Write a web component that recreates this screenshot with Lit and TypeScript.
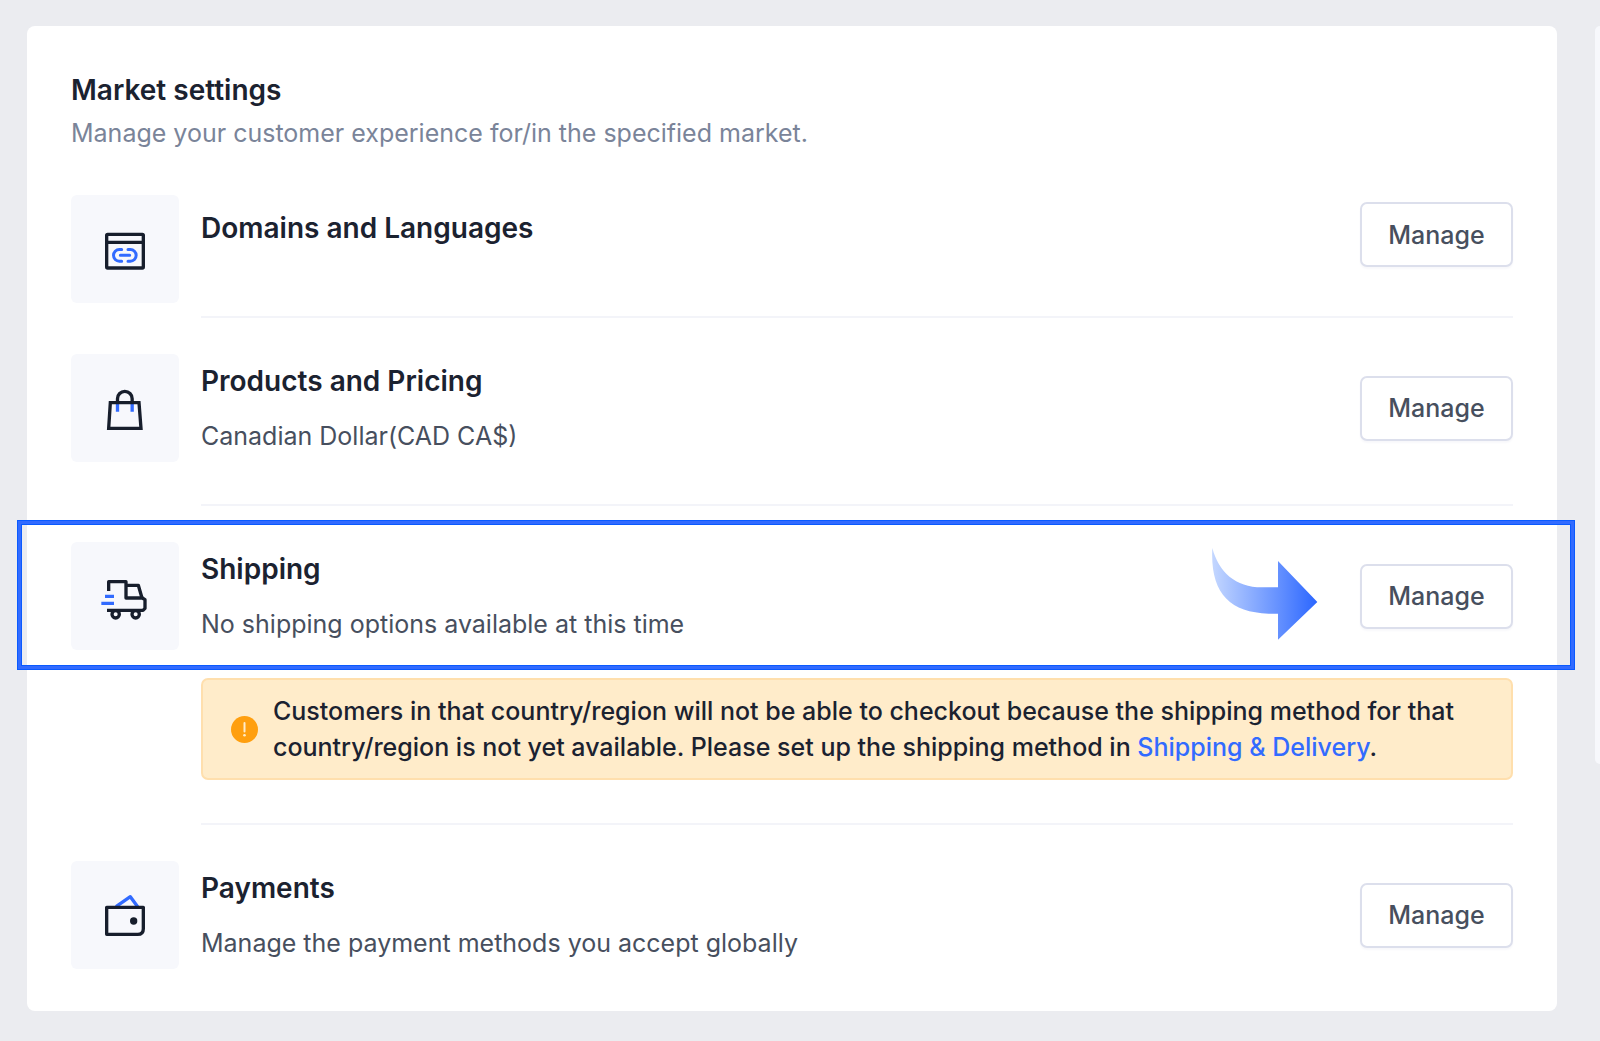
import { LitElement, html, svg, css, nothing } from "lit";
import { customElement } from "lit/decorators.js";

const INK = "#171e2c";
const BLUE = "#326bff";

const icons = {
  domains: svg`
    <g fill="none" stroke=${INK} stroke-width="10">
      <rect x="107" y="118" width="110" height="101" rx="3" />
      <path d="M107 142H217" />
    </g>
    <g fill="none" stroke=${BLUE} stroke-width="9" stroke-linecap="round">
      <path d="M152 163.500H145a17.500 17.500 0 0 0 0 35H152M171 163.500H178a17.500 17.500 0 0 1 0 35H171M148 181H176" />
    </g>`,
  products: svg`
    <g fill="none" stroke-width="10">
      <path stroke=${BLUE} d="M139.500 148V173M183.500 148V173" />
      <path stroke=${INK} d="M118 146H204L210 223H113Z" />
      <path stroke=${INK} d="M139.500 146V134a22 22 0 0 1 44 0V146" />
    </g>`,
  shipping: svg`
    <g fill="none" stroke-width="10" stroke-linejoin="round">
      <path stroke=${INK} d="M113 147V119H165V168H214L222 173V199L216 205H108" />
      <path stroke=${INK} d="M165 130H202L213 168" />
      <circle stroke=${INK} cx="134" cy="217" r="11" />
      <circle stroke=${INK} cx="194" cy="217" r="11" />
      <path stroke=${BLUE} d="M102 163H129M91 184H129" />
    </g>`,
  payments: svg`
    <g fill="none" stroke-width="10" stroke-linejoin="round">
      <path stroke=${BLUE} d="M135 137L178 107L200 137" />
      <path stroke=${INK} d="M107 139H217V203Q217 220 200 220H107Z" />
    </g>
    <circle fill=${INK} cx="188" cy="180" r="11" />`,
};

interface Setting {
  icon: keyof typeof icons;
  title: string;
  description?: string;
  warning?: boolean;
  highlighted?: boolean;
}

const settings: Setting[] = [
  { icon: "domains", title: "Domains and Languages" },
  { icon: "products", title: "Products and Pricing", description: "Canadian Dollar(CAD CA$)" },
  {
    icon: "shipping",
    title: "Shipping",
    description: "No shipping options available at this time",
    warning: true,
    highlighted: true,
  },
  { icon: "payments", title: "Payments", description: "Manage the payment methods you accept globally" },
];

@customElement("app-root")
export class AppRoot extends LitElement {
  static styles = css`
    :host {
      display: block;
      font-family: Inter, "Liberation Sans", sans-serif;
      color: #1b2230;
    }
    * {
      box-sizing: border-box;
    }
    h1, h2, p, ul {
      margin: 0;
      padding: 0;
    }
    .page {
      display: flex;
      gap: 38px;
      min-height: 100vh;
      padding: 26px 0 30px 27px;
      background: #ebecf0;
      overflow: hidden;
    }
    .card {
      flex: 1;
      min-width: 0;
      padding: 44px 44px 42px;
      border-radius: 8px;
      background: #fff;
    }
    .next-card {
      flex: none;
      width: 5px;
      height: 738px;
      border-radius: 8px 0 0 8px;
      background: #f7f8fc;
    }
    .heading {
      font-size: 28px;
      line-height: 40px;
      font-weight: 600;
    }
    .subheading {
      margin-top: 4px;
      font-size: 25px;
      line-height: 38px;
      color: #7a8499;
    }
    .list {
      display: grid;
      gap: 36px;
      margin-top: 43px;
      list-style: none;
    }
    .row {
      position: relative;
      display: flex;
      align-items: flex-start;
      gap: 22px;
    }
    .tile {
      flex: none;
      width: 108px;
      height: 108px;
      border-radius: 6px;
      background: #f7f8fc;
    }
    .body {
      flex: 1;
      min-width: 0;
      padding-bottom: 42px;
      border-bottom: 2px solid #f3f4f9;
    }
    .row:last-child .body {
      padding-bottom: 0;
      border-bottom: 0;
    }
    .main {
      display: flex;
      align-items: center;
      justify-content: space-between;
      gap: 24px;
      min-height: 79px;
      padding: 6px 0;
    }
    .title {
      margin-bottom: 14px;
      font-size: 28px;
      line-height: 42px;
      font-weight: 600;
    }
    .description {
      font-size: 25px;
      line-height: 40px;
      color: #474f5e;
    }
    .manage {
      flex: none;
      width: 153px;
      height: 65px;
      padding: 0;
      border: 2px solid #dcdfec;
      border-radius: 7px;
      background: #fff;
      box-shadow: 0 2px 2px #f8f8fb;
      color: #474f5e;
      font: 500 25px/36px Inter, "Liberation Sans", sans-serif;
      cursor: pointer;
    }
    .alert {
      display: flex;
      align-items: center;
      gap: 15px;
      margin: 28px 0 1px;
      padding: 13px 28px;
      border: 2px solid #ffdfad;
      border-radius: 7px;
      background: #ffecca;
      font-size: 25px;
      font-weight: 500;
      line-height: 36px;
    }
    .alert-icon {
      flex: none;
      width: 27px;
      height: 27px;
    }
    .link {
      color: #326bff;
      text-decoration: none;
    }
    .frame {
      position: absolute;
      top: -22px;
      left: -54px;
      right: -62px;
      height: 150px;
      border: 1px solid #0a5aff;
      box-shadow: inset 0 0 0 3px #326bff, inset 0 0 0 4px #0a5aff;
      pointer-events: none;
    }
    .arrow {
      position: absolute;
      top: 6px;
      right: 195px;
      width: 106px;
      height: 92px;
      pointer-events: none;
    }
  `;

  private renderWarning() {
    return html`
      <div class="alert" role="alert">
        <svg class="alert-icon" viewBox="0 0 27 27" aria-hidden="true">
          <circle cx="13.500" cy="13.500" r="13.500" fill="#ff9f0f" />
          <path d="M13.500 7V15.500" stroke="#ffecca" stroke-width="2" stroke-linecap="round" />
          <circle cx="13.500" cy="19.300" r="1.300" fill="#ffecca" />
        </svg>
        <p>
          Customers in that country/region will not be able to checkout because the shipping method for that
          country/region is not yet available. Please set up the shipping method in
          <a class="link" href="#shipping-delivery">Shipping &amp; Delivery</a>.
        </p>
      </div>
    `;
  }

  private renderHighlight() {
    return html`
      <div class="frame"></div>
      <svg class="arrow" viewBox="0 0 318 276" aria-hidden="true">
        <defs>
          <linearGradient id="fade" x1="0" y1="0" x2="1" y2="0">
            <stop offset="0" stop-color="#c4d7ff" />
            <stop offset="0.630" stop-color="#6591ff" />
            <stop offset="1" stop-color="#2b66ff" />
          </linearGradient>
        </defs>
        <path
          fill="url(#fade)"
          d="M1 0C20 72 70 118 150 118H198V39L316 162L198 275V197H170C50 194 -6 132 1 0Z"
        />
      </svg>
    `;
  }

  private renderRow(item: Setting) {
    const id = `title-${item.icon}`;
    return html`
      <li class="row">
        <svg class="tile" viewBox="0 0 324 324" aria-hidden="true">${icons[item.icon]}</svg>
        <div class="body">
          <div class="main">
            <div>
              <h2 class="title" id=${id}>${item.title}</h2>
              ${item.description ? html`<p class="description">${item.description}</p>` : nothing}
            </div>
            <button class="manage" type="button" aria-describedby=${id}>Manage</button>
          </div>
          ${item.warning ? this.renderWarning() : nothing}
        </div>
        ${item.highlighted ? this.renderHighlight() : nothing}
      </li>
    `;
  }

  render() {
    return html`
      <div class="page">
        <main class="card">
          <h1 class="heading">Market settings</h1>
          <p class="subheading">Manage your customer experience for/in the specified market.</p>
          <ul class="list">
            ${settings.map((item) => this.renderRow(item))}
          </ul>
        </main>
        <aside class="next-card"></aside>
      </div>
    `;
  }
}
